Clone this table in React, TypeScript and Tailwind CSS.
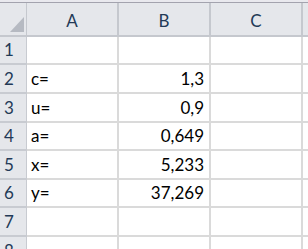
const cols = ["A", "B", "C"];

const rows: { n: number; label: string; value: string; h: string }[] = [
  { n: 1, label: "", value: "", h: "h-[28px]" },
  { n: 2, label: "c=", value: "1,3", h: "h-[29px]" },
  { n: 3, label: "u=", value: "0,9", h: "h-[29px]" },
  { n: 4, label: "a=", value: "0,649", h: "h-[28px]" },
  { n: 5, label: "x=", value: "5,233", h: "h-[29px]" },
  { n: 6, label: "y=", value: "37,269", h: "h-[28px]" },
  { n: 7, label: "", value: "", h: "h-[29px]" },
  { n: 8, label: "", value: "", h: "h-[29px]" },
];

export default function App() {
  return (
    <div
      className="h-[249px] w-[308px] overflow-hidden bg-white text-[17px] leading-none text-black"
      style={{ fontFamily: "Lato, 'Liberation Sans', sans-serif" }}
    >
      <div className="h-[3px] border-b border-[#a3a3ae] bg-[#e9e9ee]" />

      {/* column headers */}
      <div className="flex h-[34px] border-b-2 border-[#c5c8ce] bg-[#e5e7eb] text-[#233a57]">
        <div className="relative w-[27px] shrink-0 border-r border-[#c5c8ce]">
          <svg className="absolute left-[10px] top-[14px]" width="14" height="15" viewBox="0 0 14 15">
            <polygon points="14,0 14,15 0,15" fill="#b6bac2" />
          </svg>
        </div>
        {cols.map((c) => (
          <div
            key={c}
            className="flex w-[92px] shrink-0 items-end justify-center border-r-2 border-[#c5c8ce] pb-[6px]"
          >
            {c}
          </div>
        ))}
        <div className="flex-1" />
      </div>

      {rows.map((r) => (
        <div key={r.n} className={`flex ${r.h} shrink-0`}>
          <div className="flex w-[27px] shrink-0 items-end border-b-2 border-r border-[#c8cbd1] bg-[#e5e7eb] pb-[5px] pl-[4px] text-[#233a57]">
            {r.n}
          </div>
          <div className="flex w-[92px] shrink-0 items-end border-b-2 border-r-2 border-[#dadada] pb-[5px] pl-[4px]">
            {r.label}
          </div>
          <div className="flex w-[92px] shrink-0 items-end justify-end border-b-2 border-r-2 border-[#dadada] pb-[5px] pr-[5px]">
            {r.value}
          </div>
          <div className="w-[92px] shrink-0 border-b-2 border-r-2 border-[#dadada]" />
          <div className="flex-1 border-b-2 border-[#dadada]" />
        </div>
      ))}
    </div>
  );
}
